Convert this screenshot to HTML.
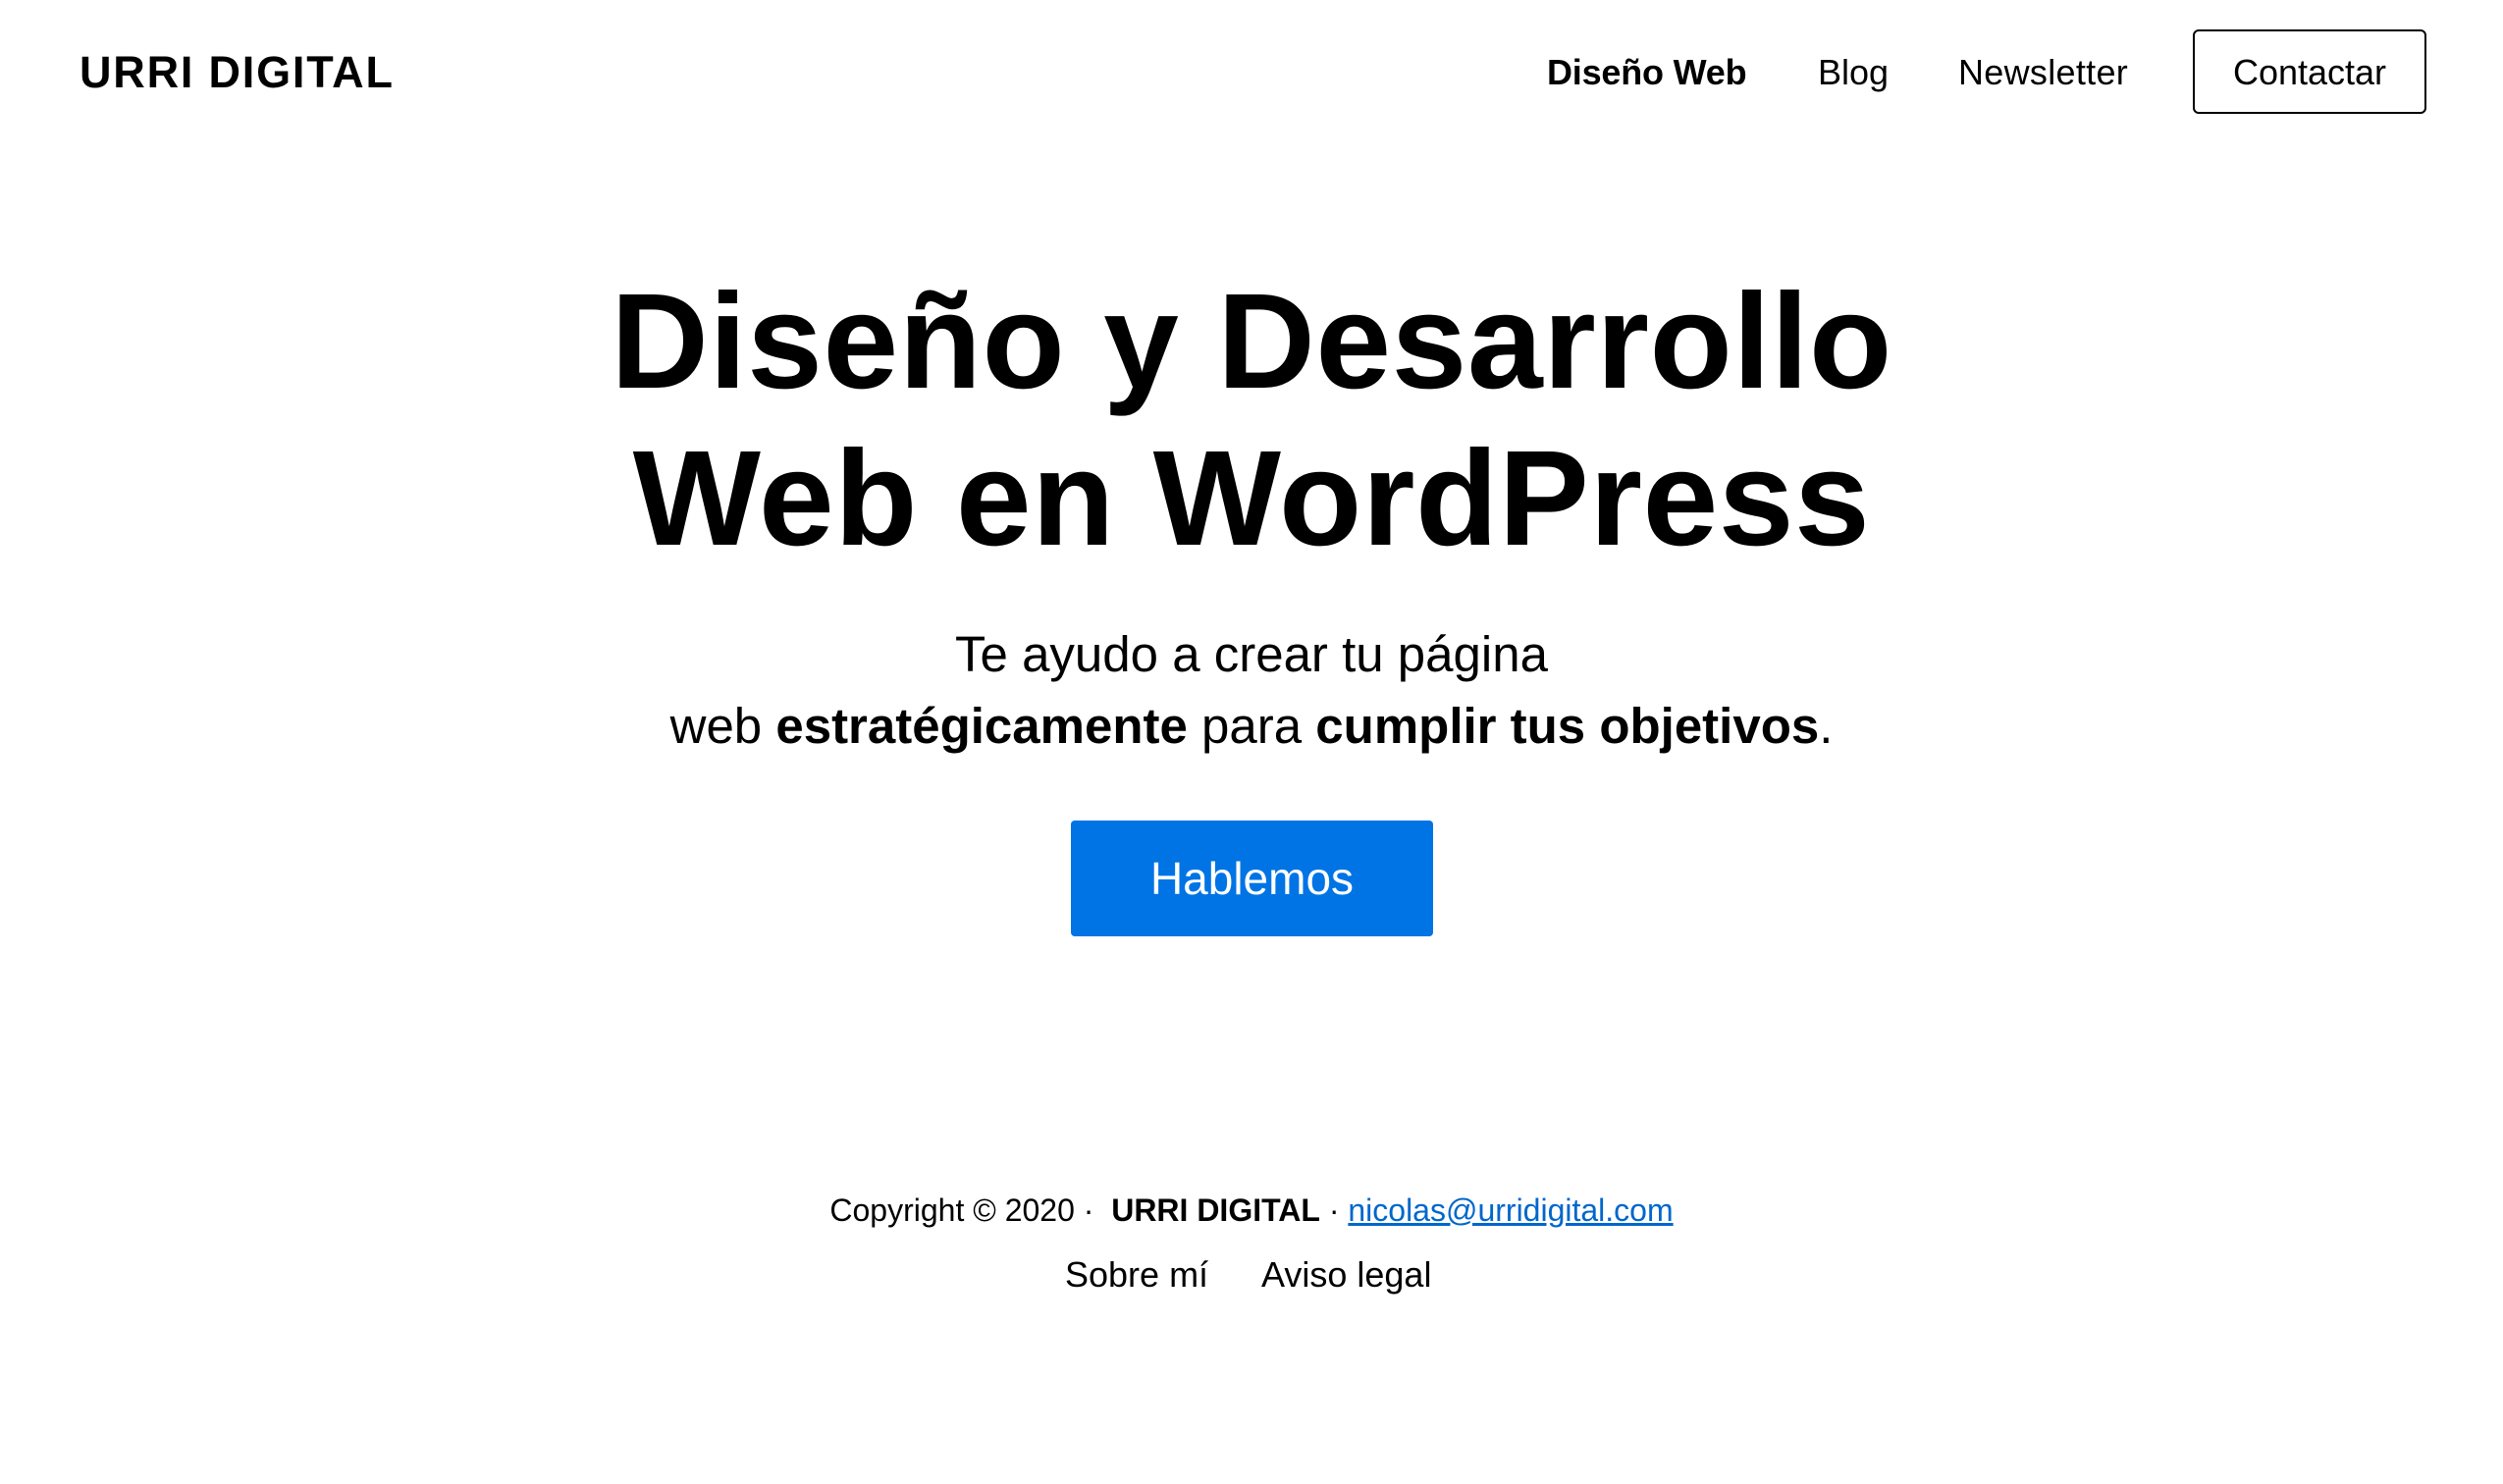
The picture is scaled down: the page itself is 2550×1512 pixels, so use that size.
<!DOCTYPE html>
<html><head><meta charset="utf-8"><style>
body{margin:0;width:2550px;height:1512px;background:#fff;font-family:"Liberation Sans",sans-serif;color:#000;position:relative;overflow:hidden}
.a{position:absolute;white-space:nowrap;line-height:1}
</style></head><body>
<div class="a" style="left:81px;top:51px;font-size:45px;font-weight:bold;letter-spacing:1.8px">URRI DIGITAL</div>
<div class="a" style="left:1576px;top:56px;font-size:36px;font-weight:bold;width:206px;letter-spacing:-0.2px">Diseño Web</div>
<div class="a" style="left:1852px;top:56px;font-size:36px">Blog</div>
<div class="a" style="left:1995px;top:56px;font-size:36px;letter-spacing:0.3px">Newsletter</div>
<div class="a" style="left:2234px;top:30px;width:234px;height:82px;border:2px solid #000;border-radius:6px"></div>
<div class="a" style="left:2234px;top:56px;width:238px;text-align:center;font-size:36px">Contactar</div>
<div class="a" style="left:0;width:2550px;text-align:center;top:268px;font-size:138px;font-weight:bold;line-height:160px;letter-spacing:0.5px">Diseño y Desarrollo<br>Web en WordPress</div>
<div class="a" style="left:0;width:2550px;text-align:center;top:630px;font-size:51px;line-height:73px">Te ayudo a crear tu página<br>web <b>estratégicamente</b> para <b>cumplir tus objetivos</b>.</div>
<div class="a" style="left:1091px;top:836px;width:369px;height:118px;background:#0074e4;border-radius:4px;color:#fff;font-size:46px;line-height:118px;text-align:center">Hablemos</div>
<div class="a" style="left:0;width:2550px;text-align:center;top:1217px;font-size:32px">Copyright © 2020 · &nbsp;<b>URRI DIGITAL</b> · <span style="color:#0066cc;text-decoration:underline">nicolas@urridigital.com</span></div>
<div class="a" style="left:1085px;top:1281px;font-size:36px">Sobre mí</div>
<div class="a" style="left:1285px;top:1281px;font-size:36px">Aviso legal</div>
</body></html>
